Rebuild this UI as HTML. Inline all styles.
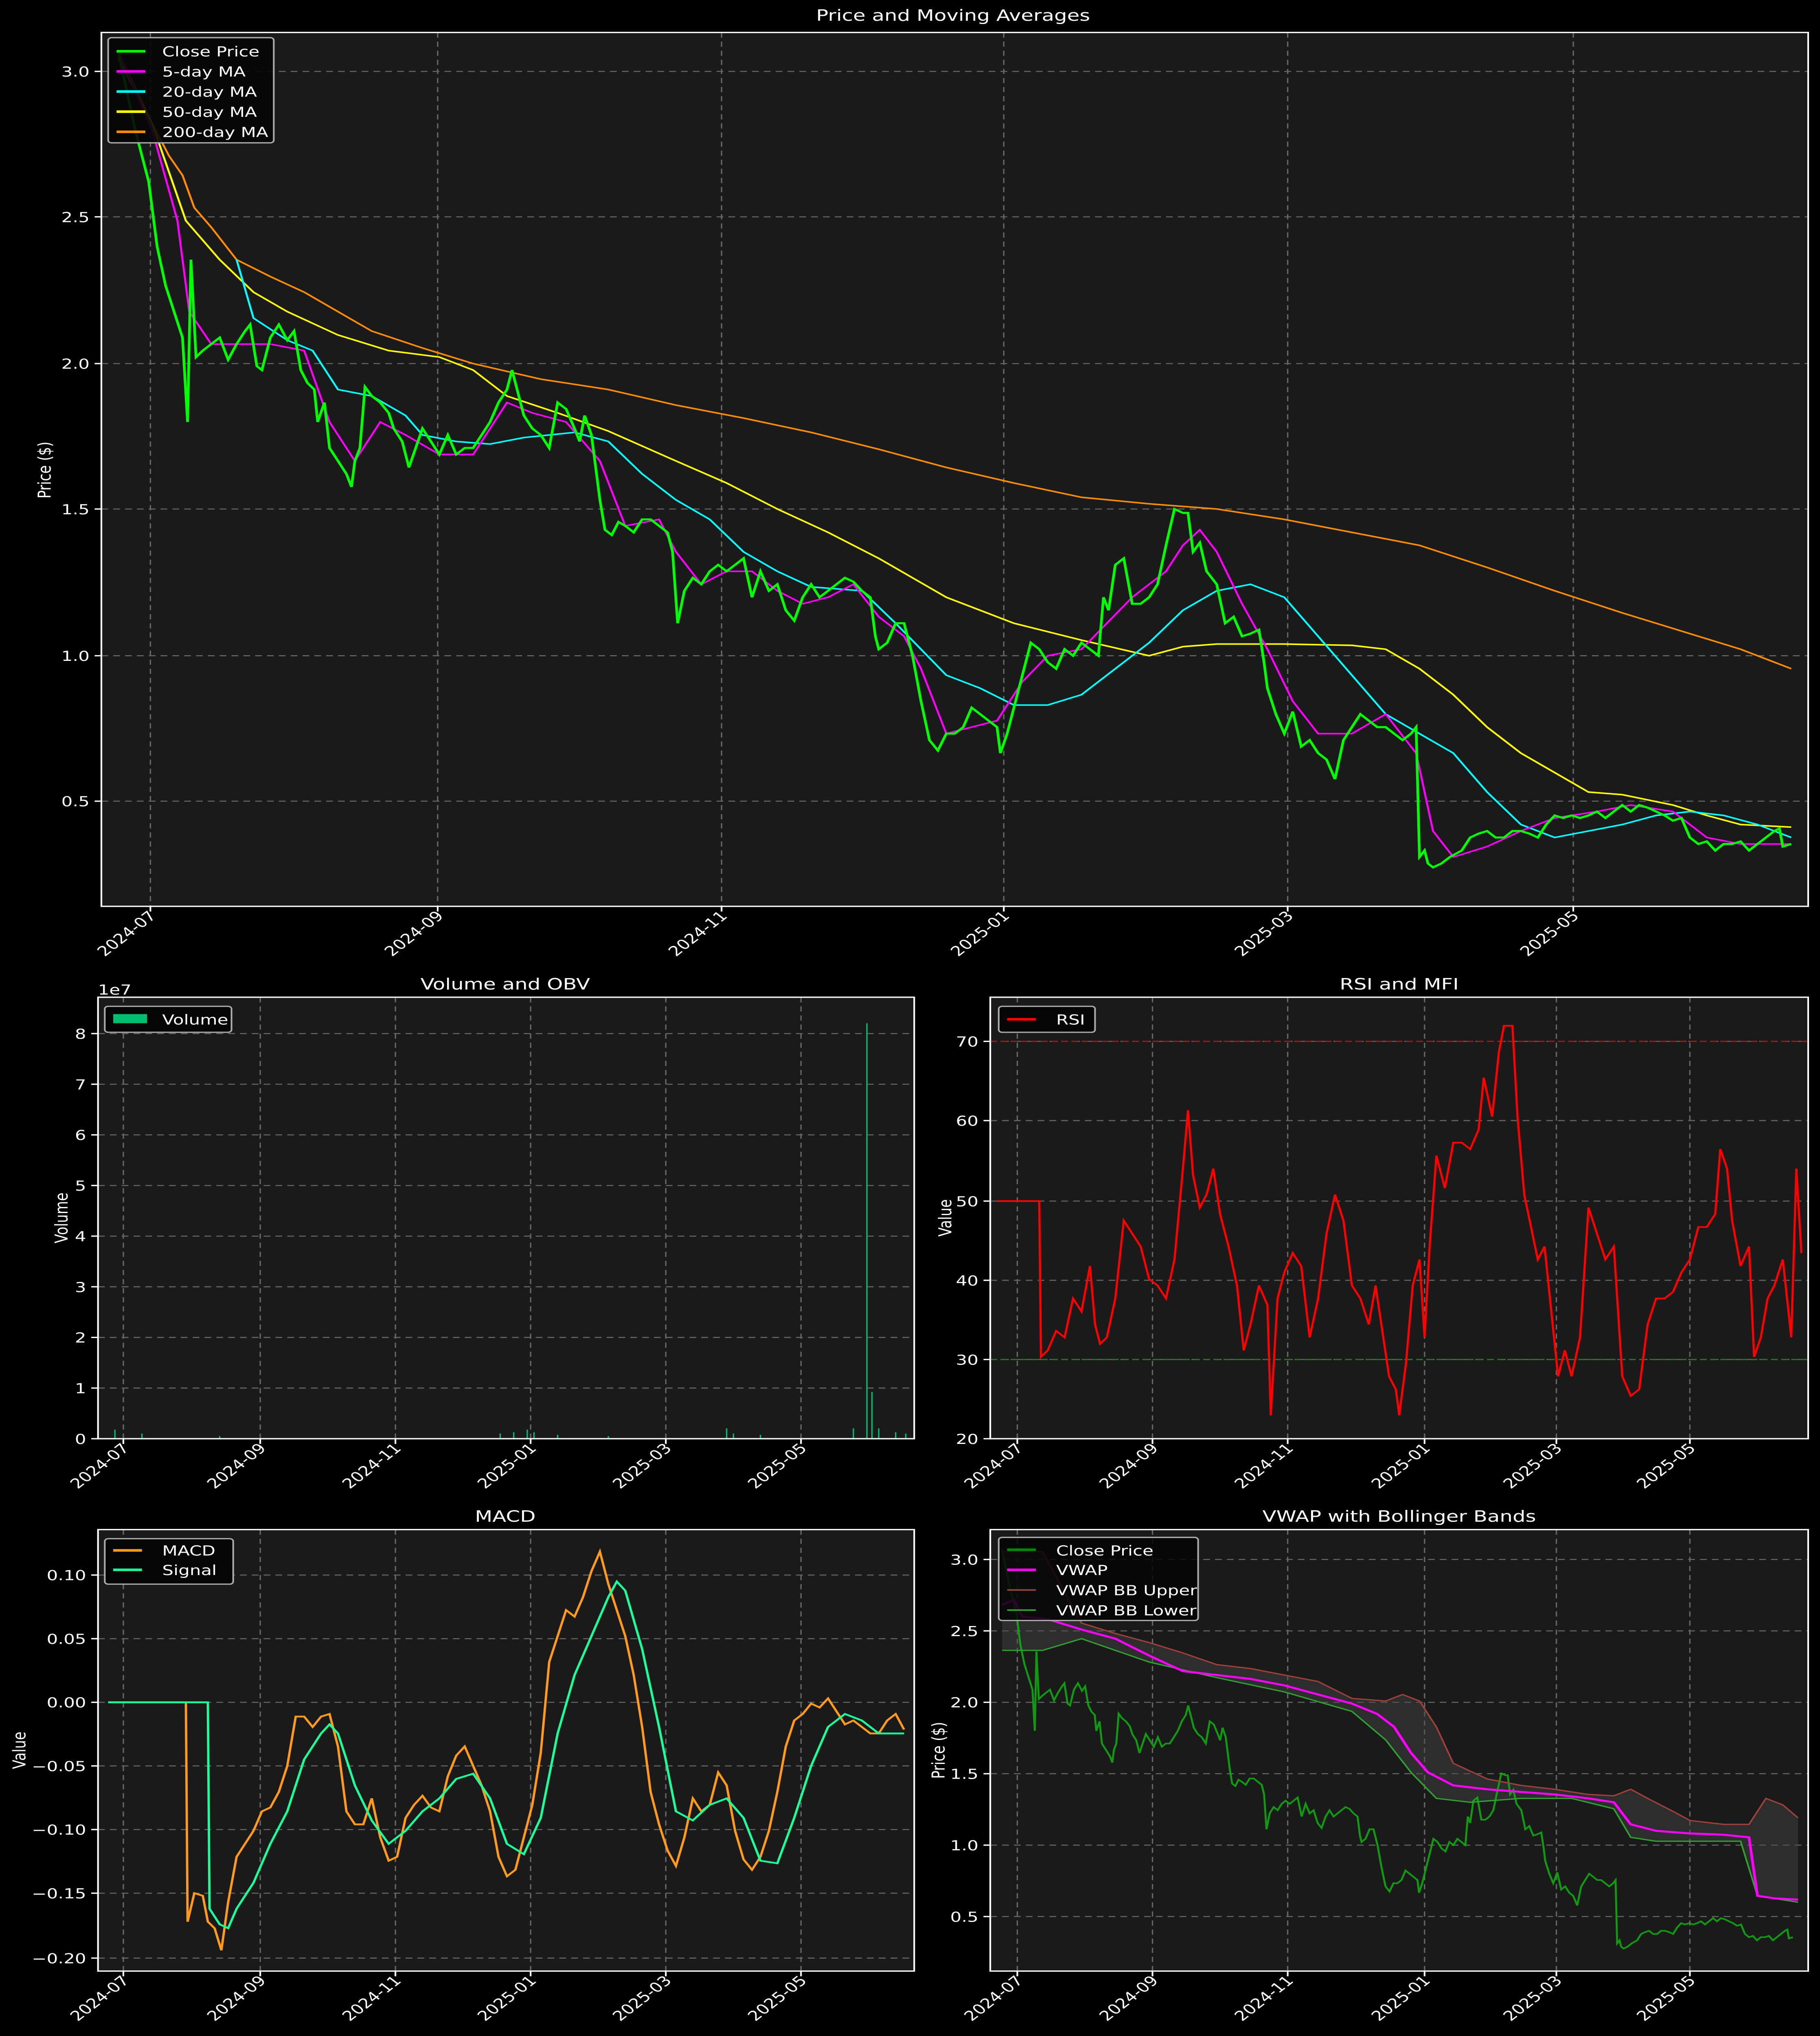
<!DOCTYPE html>
<html><head><meta charset="utf-8">
<style>
html,body{margin:0;padding:0;background:#000;width:100%;height:100%;overflow:hidden;}
svg{display:block;position:fixed;left:0;top:0;width:100vw;height:100vh;}
text{font-family:"DejaVu Sans","Liberation Sans",sans-serif;fill:#fff;}
</style></head>
<body>
<svg viewBox="0 0 1077 1568" preserveAspectRatio="none" xmlns="http://www.w3.org/2000/svg">
<rect width="1077" height="1568" fill="#000"/>
<defs>
<polyline id="close" fill="none" points="70,40 80,100 88,140 93,190 98,220 103,240 108,260 111,325 113,200 116,275 120,270 125,265 130,260 135,277 140,265 145,255 148,250 152,282 155,285 160,260 165,250 170,262 174,255 178,285 182,295 186,300 188,325 192,310 195,345 200,355 205,365 208,375 210,355 213,345 216,298 220,305 225,310 230,318 233,330 238,340 242,360 246,345 250,330 255,340 260,350 265,335 270,350 275,345 280,345 285,335 290,325 295,310 300,300 303,285 306,300 310,320 315,330 320,335 325,345 330,310 335,315 340,330 343,340 346,320 350,335 355,385 358,408 362,412 366,402 370,405 375,410 380,400 385,400 390,405 395,410 398,425 401,480 405,455 410,445 415,450 420,440 425,435 430,440 435,435 440,430 445,460 450,440 455,455 460,450 465,470 470,478 475,460 480,450 485,460 490,455 495,450 500,445 505,448 510,455 515,460 518,490 520,500 525,495 530,480 535,480 540,505 545,540 550,570 555,578 560,565 565,565 570,560 575,545 580,550 585,555 590,560 592,580 596,565 600,545 605,520 610,495 615,500 620,510 625,515 630,500 635,505 640,495 645,500 650,505 653,460 656,470 660,435 665,430 670,465 675,465 680,460 685,450 690,420 695,392 700,395 703,395 706,425 710,418 714,440 720,450 725,480 730,475 735,490 740,488 745,485 748,510 750,530 755,550 760,565 765,548 770,575 775,570 780,580 785,585 790,600 795,570 800,560 805,550 810,555 815,560 820,560 825,565 830,570 835,565 838,560 840,660 843,655 845,665 848,668 853,665 858,660 865,655 870,645 875,642 880,640 885,645 890,645 895,640 900,640 905,642 910,645 915,635 920,628 925,630 930,628 935,630 940,628 945,625 950,630 955,625 960,620 965,625 970,620 975,622 980,625 985,628 990,632 995,630 1000,645 1005,650 1010,648 1015,655 1020,650 1025,650 1030,648 1035,655 1040,650 1045,645 1050,640 1053,638 1055,652 1060,650"/>
</defs>

<!-- ================= TOP PANEL ================= -->
<rect x="60" y="25" width="1010" height="673" fill="#1a1a1a"/>
<g stroke="#666" stroke-width="0.8" stroke-dasharray="4,3">
<line x1="89" y1="25" x2="89" y2="698"/><line x1="259" y1="25" x2="259" y2="698"/><line x1="427" y1="25" x2="427" y2="698"/><line x1="594" y1="25" x2="594" y2="698"/><line x1="762" y1="25" x2="762" y2="698"/><line x1="931" y1="25" x2="931" y2="698"/>
<line x1="60" y1="55" x2="1070" y2="55"/><line x1="60" y1="167" x2="1070" y2="167"/><line x1="60" y1="280" x2="1070" y2="280"/><line x1="60" y1="392" x2="1070" y2="392"/><line x1="60" y1="505" x2="1070" y2="505"/><line x1="60" y1="617" x2="1070" y2="617"/>
</g>
<polyline fill="none" stroke="#ff8c00" stroke-width="1.2" points="70,40 90,95 100,120 108,135 115,160 125,175 140,200 160,213 180,225 200,240 220,255 250,268 280,280 320,292 360,300 400,312 440,322 480,333 520,346 560,360 600,372 640,383 680,388 720,392 760,400 800,410 840,420 880,437 920,455 960,472 1000,488 1030,500 1060,515"/>
<polyline fill="none" stroke="#ffff00" stroke-width="1.2" points="70,45 90,95 110,170 130,200 150,225 170,240 200,258 230,270 260,275 280,285 300,305 330,318 360,332 400,355 430,372 460,392 490,410 520,430 560,460 600,480 640,493 680,505 700,498 720,496 760,496 800,497 820,500 840,515 860,535 880,560 900,580 920,595 940,610 960,612 990,620 1010,628 1030,635 1060,637"/>
<polyline fill="none" stroke="#00ffff" stroke-width="1.2" points="140,200 150,245 170,262 185,270 200,300 220,305 240,320 250,335 270,340 290,342 310,337 340,333 360,340 380,365 400,385 420,400 440,425 460,440 480,452 510,455 530,480 560,520 580,530 600,543 620,543 640,535 660,515 680,495 700,470 720,455 740,450 760,460 780,490 800,520 820,550 840,565 860,580 880,610 900,635 920,645 940,640 960,635 980,628 1000,625 1020,628 1040,635 1060,645"/>
<polyline fill="none" stroke="#ff00ff" stroke-width="1.2" points="70,40 90,100 105,170 112,240 125,265 140,265 160,265 180,270 195,325 210,355 225,325 240,335 260,350 280,350 300,310 315,318 335,325 355,355 370,405 390,400 400,425 415,450 430,440 445,440 460,455 475,465 490,460 505,450 520,475 535,490 545,515 560,565 575,560 590,555 605,525 620,505 640,500 655,480 670,460 690,440 700,420 710,408 720,425 735,465 750,500 765,540 780,565 800,565 820,550 838,580 848,640 860,660 880,652 900,640 920,630 945,625 965,620 990,625 1010,645 1030,650 1060,650"/>
<use href="#close" stroke="#00ff00" stroke-width="1.6"/>
<rect x="60" y="25" width="1010" height="673" fill="none" stroke="#fff" stroke-width="1"/>
<rect x="64" y="29" width="98" height="81" rx="2" fill="#050505" fill-opacity="0.9" stroke="#aaa" stroke-width="1"/>
<g stroke-width="2"><line x1="69" y1="39.5" x2="86" y2="39.5" stroke="#00ff00"/><line x1="69" y1="55" x2="86" y2="55" stroke="#ff00ff"/><line x1="69" y1="70.5" x2="86" y2="70.5" stroke="#00ffff"/><line x1="69" y1="86" x2="86" y2="86" stroke="#ffff00"/><line x1="69" y1="101.5" x2="86" y2="101.5" stroke="#ff8c00"/></g>
<g font-size="10.5"><text x="96" y="43.5">Close Price</text><text x="96" y="59">5-day MA</text><text x="96" y="74.5">20-day MA</text><text x="96" y="90">50-day MA</text><text x="96" y="105.5">200-day MA</text></g>
<text x="564" y="16" font-size="12" text-anchor="middle">Price and Moving Averages</text>
<g stroke="#fff" stroke-width="1"><line x1="56" y1="55" x2="60" y2="55"/><line x1="56" y1="167" x2="60" y2="167"/><line x1="56" y1="280" x2="60" y2="280"/><line x1="56" y1="392" x2="60" y2="392"/><line x1="56" y1="505" x2="60" y2="505"/><line x1="56" y1="617" x2="60" y2="617"/>
<line x1="89" y1="698" x2="89" y2="702"/><line x1="259" y1="698" x2="259" y2="702"/><line x1="427" y1="698" x2="427" y2="702"/><line x1="594" y1="698" x2="594" y2="702"/><line x1="762" y1="698" x2="762" y2="702"/><line x1="931" y1="698" x2="931" y2="702"/></g>
<g font-size="10.5" text-anchor="end"><text x="53" y="59">3.0</text><text x="53" y="171">2.5</text><text x="53" y="284">2.0</text><text x="53" y="396">1.5</text><text x="53" y="509">1.0</text><text x="53" y="621">0.5</text>
<text transform="translate(93,706) rotate(-45)">2024-07</text><text transform="translate(263,706) rotate(-45)">2024-09</text><text transform="translate(431,706) rotate(-45)">2024-11</text><text transform="translate(598,706) rotate(-45)">2025-01</text><text transform="translate(766,706) rotate(-45)">2025-03</text><text transform="translate(935,706) rotate(-45)">2025-05</text></g>
<text transform="translate(30,362) rotate(-90)" font-size="10.5" text-anchor="middle">Price ($)</text>

<!-- ================= VOLUME ================= -->
<rect x="58" y="768" width="483" height="340" fill="#1a1a1a"/>
<g stroke="#666" stroke-width="0.8" stroke-dasharray="4,3">
<line x1="73" y1="768" x2="73" y2="1108"/><line x1="154" y1="768" x2="154" y2="1108"/><line x1="234" y1="768" x2="234" y2="1108"/><line x1="314" y1="768" x2="314" y2="1108"/><line x1="394" y1="768" x2="394" y2="1108"/><line x1="474" y1="768" x2="474" y2="1108"/>
<line x1="58" y1="1069" x2="541" y2="1069"/><line x1="58" y1="1030" x2="541" y2="1030"/><line x1="58" y1="991" x2="541" y2="991"/><line x1="58" y1="952" x2="541" y2="952"/><line x1="58" y1="913" x2="541" y2="913"/><line x1="58" y1="874" x2="541" y2="874"/><line x1="58" y1="835" x2="541" y2="835"/><line x1="58" y1="796" x2="541" y2="796"/>
</g>
<g stroke="#00c070" stroke-width="0.8">
<line x1="68" y1="1108" x2="68" y2="1101"/><line x1="84" y1="1108" x2="84" y2="1104"/><line x1="130" y1="1108" x2="130" y2="1106"/><line x1="296" y1="1108" x2="296" y2="1104"/><line x1="304" y1="1108" x2="304" y2="1103"/><line x1="312" y1="1108" x2="312" y2="1101"/><line x1="316" y1="1108" x2="316" y2="1103"/><line x1="330" y1="1108" x2="330" y2="1105"/><line x1="360" y1="1108" x2="360" y2="1106"/><line x1="430" y1="1108" x2="430" y2="1100"/><line x1="434" y1="1108" x2="434" y2="1104"/><line x1="450" y1="1108" x2="450" y2="1105"/><line x1="505" y1="1108" x2="505" y2="1100"/><line x1="513" y1="1108" x2="513" y2="788"/><line x1="516" y1="1108" x2="516" y2="1072"/><line x1="520" y1="1108" x2="520" y2="1100"/><line x1="530" y1="1108" x2="530" y2="1103"/><line x1="536" y1="1108" x2="536" y2="1104"/>
</g>
<rect x="58" y="768" width="483" height="340" fill="none" stroke="#fff" stroke-width="1"/>
<rect x="62" y="775" width="75" height="20" rx="2" fill="#050505" stroke="#aaa" stroke-width="1"/>
<rect x="67" y="781" width="20" height="7" fill="#00c070"/>
<text x="96" y="789" font-size="10.5">Volume</text>
<text x="299" y="762" font-size="12" text-anchor="middle">Volume and OBV</text>
<text x="58" y="766" font-size="10.5">1e7</text>
<g stroke="#fff" stroke-width="1"><line x1="54" y1="1108" x2="58" y2="1108"/><line x1="54" y1="1069" x2="58" y2="1069"/><line x1="54" y1="1030" x2="58" y2="1030"/><line x1="54" y1="991" x2="58" y2="991"/><line x1="54" y1="952" x2="58" y2="952"/><line x1="54" y1="913" x2="58" y2="913"/><line x1="54" y1="874" x2="58" y2="874"/><line x1="54" y1="835" x2="58" y2="835"/><line x1="54" y1="796" x2="58" y2="796"/>
<line x1="73" y1="1108" x2="73" y2="1112"/><line x1="154" y1="1108" x2="154" y2="1112"/><line x1="234" y1="1108" x2="234" y2="1112"/><line x1="314" y1="1108" x2="314" y2="1112"/><line x1="394" y1="1108" x2="394" y2="1112"/><line x1="474" y1="1108" x2="474" y2="1112"/></g>
<g font-size="10.5" text-anchor="end"><text x="51" y="1112">0</text><text x="51" y="1073">1</text><text x="51" y="1034">2</text><text x="51" y="995">3</text><text x="51" y="956">4</text><text x="51" y="917">5</text><text x="51" y="878">6</text><text x="51" y="839">7</text><text x="51" y="800">8</text>
<text transform="translate(77,1116) rotate(-45)">2024-07</text><text transform="translate(158,1116) rotate(-45)">2024-09</text><text transform="translate(238,1116) rotate(-45)">2024-11</text><text transform="translate(318,1116) rotate(-45)">2025-01</text><text transform="translate(398,1116) rotate(-45)">2025-03</text><text transform="translate(478,1116) rotate(-45)">2025-05</text></g>
<text transform="translate(40,938) rotate(-90)" font-size="10.5" text-anchor="middle">Volume</text>

<!-- ================= RSI ================= -->
<rect x="586" y="768" width="484" height="340" fill="#1a1a1a"/>
<g stroke="#666" stroke-width="0.8" stroke-dasharray="4,3">
<line x1="602" y1="768" x2="602" y2="1108"/><line x1="682" y1="768" x2="682" y2="1108"/><line x1="762" y1="768" x2="762" y2="1108"/><line x1="843" y1="768" x2="843" y2="1108"/><line x1="921" y1="768" x2="921" y2="1108"/><line x1="1000" y1="768" x2="1000" y2="1108"/>
<line x1="586" y1="1047" x2="1070" y2="1047"/><line x1="586" y1="986" x2="1070" y2="986"/><line x1="586" y1="925" x2="1070" y2="925"/><line x1="586" y1="863" x2="1070" y2="863"/><line x1="586" y1="802" x2="1070" y2="802"/>
</g>
<line x1="586" y1="802" x2="1070" y2="802" stroke="#b01010" stroke-width="1" stroke-dasharray="4,2"/>
<line x1="586" y1="1047" x2="1070" y2="1047" stroke="#108010" stroke-width="1" stroke-dasharray="4,2"/>
<polyline fill="none" stroke="#ff0000" stroke-width="1.3" points="590,925 615,925 616,1045 620,1040 625,1025 630,1030 635,1000 640,1010 645,975 648,1020 651,1035 655,1030 660,1000 665,940 670,950 675,960 680,985 685,990 690,1000 695,970 700,900 703,855 706,905 710,930 714,920 718,900 722,935 727,960 732,990 736,1040 740,1020 745,990 750,1005 752,1090 756,1000 760,980 765,965 770,975 775,1030 780,1000 785,950 790,920 795,940 800,990 805,1000 810,1020 814,990 818,1025 822,1060 826,1070 828,1090 832,1050 836,990 840,970 843,1030 846,960 850,890 855,915 860,880 865,880 870,885 875,870 878,830 883,860 887,810 890,790 895,790 898,860 902,920 906,945 910,970 914,960 918,1010 922,1060 926,1040 930,1060 935,1030 940,930 945,950 950,970 955,960 960,1060 965,1075 970,1070 975,1020 980,1000 985,1000 990,995 995,980 1000,970 1005,945 1010,945 1015,935 1018,885 1022,900 1025,940 1030,975 1035,960 1038,1045 1042,1030 1046,1000 1050,990 1055,970 1060,1030 1063,900 1066,965"/>
<rect x="586" y="768" width="484" height="340" fill="none" stroke="#fff" stroke-width="1"/>
<rect x="591" y="775" width="57" height="20" rx="2" fill="#050505" stroke="#aaa" stroke-width="1"/>
<line x1="596" y1="785" x2="613" y2="785" stroke="#ff0000" stroke-width="2"/>
<text x="625" y="789" font-size="10.5">RSI</text>
<text x="828" y="762" font-size="12" text-anchor="middle">RSI and MFI</text>
<g stroke="#fff" stroke-width="1"><line x1="582" y1="1108" x2="586" y2="1108"/><line x1="582" y1="1047" x2="586" y2="1047"/><line x1="582" y1="986" x2="586" y2="986"/><line x1="582" y1="925" x2="586" y2="925"/><line x1="582" y1="863" x2="586" y2="863"/><line x1="582" y1="802" x2="586" y2="802"/>
<line x1="602" y1="1108" x2="602" y2="1112"/><line x1="682" y1="1108" x2="682" y2="1112"/><line x1="762" y1="1108" x2="762" y2="1112"/><line x1="843" y1="1108" x2="843" y2="1112"/><line x1="921" y1="1108" x2="921" y2="1112"/><line x1="1000" y1="1108" x2="1000" y2="1112"/></g>
<g font-size="10.5" text-anchor="end"><text x="579" y="1112">20</text><text x="579" y="1051">30</text><text x="579" y="990">40</text><text x="579" y="929">50</text><text x="579" y="867">60</text><text x="579" y="806">70</text>
<text transform="translate(606,1116) rotate(-45)">2024-07</text><text transform="translate(686,1116) rotate(-45)">2024-09</text><text transform="translate(766,1116) rotate(-45)">2024-11</text><text transform="translate(847,1116) rotate(-45)">2025-01</text><text transform="translate(925,1116) rotate(-45)">2025-03</text><text transform="translate(1004,1116) rotate(-45)">2025-05</text></g>
<text transform="translate(563,938) rotate(-90)" font-size="10.5" text-anchor="middle">Value</text>

<!-- ================= MACD ================= -->
<rect x="58" y="1178" width="483" height="340" fill="#1a1a1a"/>
<g stroke="#666" stroke-width="0.8" stroke-dasharray="4,3">
<line x1="73" y1="1178" x2="73" y2="1518"/><line x1="154" y1="1178" x2="154" y2="1518"/><line x1="234" y1="1178" x2="234" y2="1518"/><line x1="314" y1="1178" x2="314" y2="1518"/><line x1="394" y1="1178" x2="394" y2="1518"/><line x1="474" y1="1178" x2="474" y2="1518"/>
<line x1="58" y1="1213" x2="541" y2="1213"/><line x1="58" y1="1262" x2="541" y2="1262"/><line x1="58" y1="1311" x2="541" y2="1311"/><line x1="58" y1="1360" x2="541" y2="1360"/><line x1="58" y1="1409" x2="541" y2="1409"/><line x1="58" y1="1458" x2="541" y2="1458"/><line x1="58" y1="1508" x2="541" y2="1508"/>
</g>
<polyline fill="none" stroke="#ff9a1a" stroke-width="1.4" points="64,1311 110,1311 111,1480 115,1458 120,1460 123,1480 127,1485 131,1502 135,1465 140,1430 145,1420 150,1410 155,1395 160,1392 165,1380 170,1360 175,1322 180,1322 185,1330 190,1322 195,1320 200,1345 205,1395 210,1405 215,1405 220,1385 225,1415 230,1433 235,1430 240,1400 245,1390 250,1383 255,1392 260,1395 265,1368 270,1352 275,1345 280,1360 285,1375 290,1395 295,1430 300,1445 305,1440 310,1415 315,1390 320,1350 325,1280 330,1260 335,1240 340,1245 345,1230 350,1210 355,1195 360,1220 365,1240 370,1260 375,1290 380,1330 385,1380 390,1405 395,1425 400,1437 405,1415 410,1385 415,1395 420,1390 425,1365 430,1375 435,1410 440,1432 445,1440 450,1430 455,1410 460,1380 465,1345 470,1325 475,1320 480,1312 485,1315 490,1308 495,1318 500,1328 505,1325 510,1330 515,1335 520,1335 525,1325 530,1320 535,1332"/>
<polyline fill="none" stroke="#1aff9a" stroke-width="1.4" points="64,1311 123,1311 124,1470 130,1482 135,1485 140,1470 150,1450 160,1420 170,1395 180,1355 190,1335 195,1328 200,1335 210,1375 220,1402 230,1420 240,1410 250,1395 260,1385 270,1370 280,1366 290,1385 300,1420 310,1428 320,1400 330,1335 340,1290 350,1260 360,1230 365,1218 370,1225 380,1270 390,1330 400,1395 410,1402 420,1390 430,1385 440,1400 450,1433 460,1435 470,1400 480,1360 490,1330 500,1320 510,1325 520,1335 535,1335"/>
<rect x="58" y="1178" width="483" height="340" fill="none" stroke="#fff" stroke-width="1"/>
<rect x="62" y="1185" width="76" height="35" rx="2" fill="#050505" stroke="#aaa" stroke-width="1"/>
<line x1="67" y1="1194" x2="84" y2="1194" stroke="#ff9a1a" stroke-width="2"/>
<line x1="67" y1="1209" x2="84" y2="1209" stroke="#1aff9a" stroke-width="2"/>
<text x="96" y="1198" font-size="10.5">MACD</text><text x="96" y="1213" font-size="10.5">Signal</text>
<text x="299" y="1172" font-size="12" text-anchor="middle">MACD</text>
<g stroke="#fff" stroke-width="1"><line x1="54" y1="1213" x2="58" y2="1213"/><line x1="54" y1="1262" x2="58" y2="1262"/><line x1="54" y1="1311" x2="58" y2="1311"/><line x1="54" y1="1360" x2="58" y2="1360"/><line x1="54" y1="1409" x2="58" y2="1409"/><line x1="54" y1="1458" x2="58" y2="1458"/><line x1="54" y1="1508" x2="58" y2="1508"/>
<line x1="73" y1="1518" x2="73" y2="1522"/><line x1="154" y1="1518" x2="154" y2="1522"/><line x1="234" y1="1518" x2="234" y2="1522"/><line x1="314" y1="1518" x2="314" y2="1522"/><line x1="394" y1="1518" x2="394" y2="1522"/><line x1="474" y1="1518" x2="474" y2="1522"/></g>
<g font-size="10.5" text-anchor="end"><text x="51" y="1217">0.10</text><text x="51" y="1266">0.05</text><text x="51" y="1315">0.00</text><text x="51" y="1364">−0.05</text><text x="51" y="1413">−0.10</text><text x="51" y="1462">−0.15</text><text x="51" y="1512">−0.20</text>
<text transform="translate(77,1526) rotate(-45)">2024-07</text><text transform="translate(158,1526) rotate(-45)">2024-09</text><text transform="translate(238,1526) rotate(-45)">2024-11</text><text transform="translate(318,1526) rotate(-45)">2025-01</text><text transform="translate(398,1526) rotate(-45)">2025-03</text><text transform="translate(478,1526) rotate(-45)">2025-05</text></g>
<text transform="translate(15,1348) rotate(-90)" font-size="10.5" text-anchor="middle">Value</text>

<!-- ================= VWAP ================= -->
<rect x="586" y="1178" width="484" height="340" fill="#1a1a1a"/>
<g stroke="#666" stroke-width="0.8" stroke-dasharray="4,3">
<line x1="602" y1="1178" x2="602" y2="1518"/><line x1="682" y1="1178" x2="682" y2="1518"/><line x1="762" y1="1178" x2="762" y2="1518"/><line x1="843" y1="1178" x2="843" y2="1518"/><line x1="921" y1="1178" x2="921" y2="1518"/><line x1="1000" y1="1178" x2="1000" y2="1518"/>
<line x1="586" y1="1201" x2="1070" y2="1201"/><line x1="586" y1="1256" x2="1070" y2="1256"/><line x1="586" y1="1311" x2="1070" y2="1311"/><line x1="586" y1="1366" x2="1070" y2="1366"/><line x1="586" y1="1421" x2="1070" y2="1421"/><line x1="586" y1="1476" x2="1070" y2="1476"/>
</g>
<polygon fill="#444" fill-opacity="0.45" points="593,1195 617,1195 640,1250 660,1258 680,1265 700,1273 720,1282 740,1285 760,1290 780,1295 800,1308 820,1310 830,1305 840,1310 850,1330 860,1358 880,1370 900,1375 920,1378 940,1382 955,1383 965,1378 975,1385 990,1395 1000,1402 1020,1405 1035,1405 1045,1385 1055,1390 1064,1400 1064,1465 1040,1460 1030,1418 1000,1418 980,1418 965,1415 955,1393 930,1385 900,1385 870,1388 850,1385 835,1365 820,1340 800,1318 760,1303 720,1292 680,1280 640,1262 617,1271 593,1271"/>
<use href="#close" stroke="#10b010" stroke-opacity="0.85" stroke-width="2.5" transform="matrix(0.4727 0 0 0.4889 559.9 1174.1)"/>
<polyline fill="none" stroke="#a0403a" stroke-width="1" points="593,1195 617,1195 640,1250 660,1258 680,1265 700,1273 720,1282 740,1285 760,1290 780,1295 800,1308 820,1310 830,1305 840,1310 850,1330 860,1358 880,1370 900,1375 920,1378 940,1382 955,1383 965,1378 975,1385 990,1395 1000,1402 1020,1405 1035,1405 1045,1385 1055,1390 1064,1400"/>
<polyline fill="none" stroke="#30a030" stroke-width="1" points="593,1271 617,1271 640,1262 680,1280 720,1292 760,1303 800,1318 820,1340 835,1365 850,1385 870,1388 900,1385 930,1385 955,1393 965,1415 980,1418 1000,1418 1030,1418 1040,1460 1064,1465"/>
<polyline fill="none" stroke="#ff00ff" stroke-width="1.6" points="593,1236 600,1232 605,1245 620,1247 640,1255 660,1262 680,1275 700,1287 720,1290 740,1293 760,1298 780,1305 800,1312 815,1320 825,1330 835,1350 845,1365 860,1375 880,1378 900,1380 920,1382 940,1385 955,1388 965,1405 980,1410 1000,1412 1020,1413 1035,1415 1040,1460 1050,1462 1064,1463"/>
<rect x="586" y="1178" width="484" height="340" fill="none" stroke="#fff" stroke-width="1"/>
<rect x="591" y="1184" width="118" height="64" rx="2" fill="#050505" fill-opacity="0.85" stroke="#aaa" stroke-width="1"/>
<line x1="596" y1="1193.5" x2="613" y2="1193.5" stroke="#008a00" stroke-width="2"/>
<line x1="596" y1="1209" x2="613" y2="1209" stroke="#ff00ff" stroke-width="2"/>
<line x1="596" y1="1224.5" x2="613" y2="1224.5" stroke="#a0403a" stroke-width="1.2"/>
<line x1="596" y1="1240" x2="613" y2="1240" stroke="#30a030" stroke-width="1.2"/>
<g font-size="10.5"><text x="625" y="1198">Close Price</text><text x="625" y="1213">VWAP</text><text x="625" y="1228.5">VWAP BB Upper</text><text x="625" y="1244">VWAP BB Lower</text></g>
<text x="828" y="1172" font-size="12" text-anchor="middle">VWAP with Bollinger Bands</text>
<g stroke="#fff" stroke-width="1"><line x1="582" y1="1201" x2="586" y2="1201"/><line x1="582" y1="1256" x2="586" y2="1256"/><line x1="582" y1="1311" x2="586" y2="1311"/><line x1="582" y1="1366" x2="586" y2="1366"/><line x1="582" y1="1421" x2="586" y2="1421"/><line x1="582" y1="1476" x2="586" y2="1476"/>
<line x1="602" y1="1518" x2="602" y2="1522"/><line x1="682" y1="1518" x2="682" y2="1522"/><line x1="762" y1="1518" x2="762" y2="1522"/><line x1="843" y1="1518" x2="843" y2="1522"/><line x1="921" y1="1518" x2="921" y2="1522"/><line x1="1000" y1="1518" x2="1000" y2="1522"/></g>
<g font-size="10.5" text-anchor="end"><text x="579" y="1205">3.0</text><text x="579" y="1260">2.5</text><text x="579" y="1315">2.0</text><text x="579" y="1370">1.5</text><text x="579" y="1425">1.0</text><text x="579" y="1480">0.5</text>
<text transform="translate(606,1526) rotate(-45)">2024-07</text><text transform="translate(686,1526) rotate(-45)">2024-09</text><text transform="translate(766,1526) rotate(-45)">2024-11</text><text transform="translate(847,1526) rotate(-45)">2025-01</text><text transform="translate(925,1526) rotate(-45)">2025-03</text><text transform="translate(1004,1526) rotate(-45)">2025-05</text></g>
<text transform="translate(559,1348) rotate(-90)" font-size="10.5" text-anchor="middle">Price ($)</text>
</svg>
</body></html>
